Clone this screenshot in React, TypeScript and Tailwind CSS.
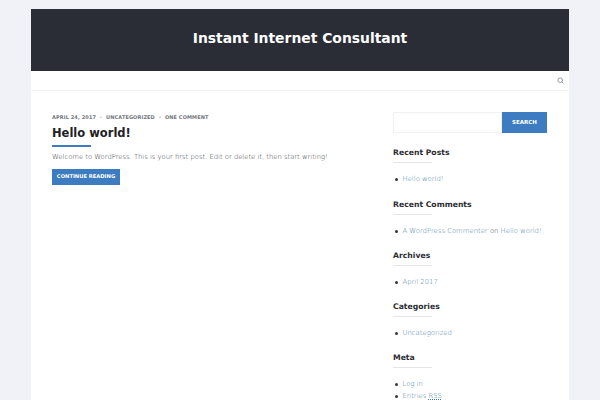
import { Search } from "lucide-react"

const linkClass = "text-[#3f77a3]"

const widgets = [
  { title: "Recent Posts", items: [<a className={linkClass}>Hello world!</a>] },
  {
    title: "Recent Comments",
    items: [
      <>
        <a className={linkClass}>A WordPress Commenter</a> on <a className={linkClass}>Hello world!</a>
      </>
    ]
  },
  { title: "Archives", items: [<a className={linkClass}>April 2017</a>] },
  { title: "Categories", items: [<a className={linkClass}>Uncategorized</a>] },
  {
    title: "Meta",
    items: [
      <a className={linkClass}>Log in</a>,
      <a className={linkClass}>
        Entries <abbr className="underline decoration-dotted">RSS</abbr>
      </a>
    ]
  }
]

const App = () => {
  return (
    <div className="h-[400px] overflow-hidden bg-[#f0f2f7] pt-[9px] pl-[31px] font-['DejaVu_Sans',sans-serif] text-[#33363b]">
      <div className="min-h-[391px] w-[538px] bg-white">
        <header className="flex h-[62px] items-center justify-center bg-[#2a2d36] pb-[3px]">
          <h1 className="text-[13.9px] font-bold text-white">Instant Internet Consultant</h1>
        </header>
        <nav className="flex h-[20px] items-center justify-end border-b border-[#f3f4f7] pr-[5px]">
          <Search size={7} strokeWidth={3} className="text-[#84929e]" />
        </nav>
        <div className="flex pt-[21px] pl-[21px]">
          <main className="w-[320px]">
            <div className="flex gap-[4px] text-[5px] leading-[10px] font-bold tracking-[0.1px] text-[#74777c]">
              <span>APRIL 24, 2017</span>
              <span>·</span>
              <span>UNCATEGORIZED</span>
              <span>·</span>
              <span>ONE COMMENT</span>
            </div>
            <h2 className="mt-[3px] text-[11.5px] leading-[17px] font-bold text-[#1f2126]">Hello world!</h2>
            <div className="mt-[3px] h-[2px] w-[39px] bg-[#3d7cc0]" />
            <p className="mt-[4px] text-[6.8px] leading-[12px] font-light">
              Welcome to WordPress. This is your first post. Edit or delete it, then start writing!
            </p>
            <a className="mt-[6px] flex h-[16px] w-[68px] items-center justify-center bg-[#3d7cc0] text-[5.2px] font-bold text-white">
              CONTINUE READING
            </a>
          </main>
          <aside className="ml-[21px] w-[154px]">
            <div className="mb-[14.3px] flex h-[21px]">
              <div className="w-[109px] border border-[#f0f1f4] bg-white" />
              <button className="w-[45px] bg-[#3d7cc0] text-[5.5px] font-bold text-white">SEARCH</button>
            </div>
            {widgets.map((w) => (
              <section key={w.title} className="mt-[13.3px]">
                <h3 className="text-[7.7px] leading-[12px] font-bold text-[#2a2c30]">{w.title}</h3>
                <div className="mt-[3px] h-px w-[39px] bg-[#e4e6ea]" />
                <ul className="mt-[11px] flex flex-col gap-[1px]">
                  {w.items.map((item, i) => (
                    <li key={i} className="flex h-[11px] items-center text-[6.85px] leading-[11px] font-light whitespace-pre">
                      <span className="mr-[4.5px] ml-[2px] size-[3px] rounded-full bg-[#33363b]" />
                      <span>{item}</span>
                    </li>
                  ))}
                </ul>
              </section>
            ))}
          </aside>
        </div>
      </div>
    </div>
  )
}

export default App
